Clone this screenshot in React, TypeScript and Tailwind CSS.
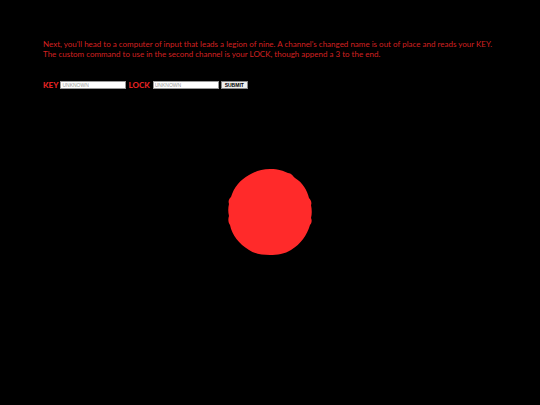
import React from 'react';

export default function App() {
  return (
    <div className="w-[540px] h-[405px] bg-black overflow-hidden" style={{ fontFamily: 'Lato, "Liberation Sans", sans-serif' }}>
      <div className="pt-[39px] pl-[43px]">
        <p className="text-[8px] leading-[10px] text-[#d42121] whitespace-nowrap">
          Next, you'll head to a computer of input that leads a legion of nine. A channel's changed name is out of place and reads your KEY.
          <br />
          The custom command to use in the second channel is your LOCK, though append a 3 to the end.
        </p>
        <div className="mt-[21px] flex items-center h-[10px]">
          <span className="text-[8px] font-black text-[#e02222] mr-[2px]">KEY</span>
          <input
            placeholder="UNKNOWN"
            className="w-[66px] h-[8px] bg-white border border-[#999] text-[5px] px-[1px] text-black placeholder:text-[#999] outline-none font-['Liberation_Sans',sans-serif]"
          />
          <span className="text-[8px] font-black text-[#e02222] ml-[2px] mr-[3px]">LOCK</span>
          <input
            placeholder="UNKNOWN"
            className="w-[66px] h-[8px] bg-white border border-[#999] text-[5px] px-[1px] text-black placeholder:text-[#999] outline-none font-['Liberation_Sans',sans-serif]"
          />
          <button className="ml-[2px] w-[27px] h-[8px] bg-[#eeeeee] border border-[#888] text-[5px] font-bold leading-none text-[#000] font-['Liberation_Sans',sans-serif]">
            SUBMIT
          </button>
        </div>
      </div>
      <div className="flex justify-center mt-[78px]">
        <svg width="86" height="88" viewBox="0 0 86 88">
          <path
            d="M43 1 C52 1 56 3 61 5 C64 5 66 8 68 10 C76 15 80 22 82 30 C84 32 85 35 84 37 C85 42 85 46 84 50 C85 52 85 55 83 57 C80 67 74 76 64 82 C58 86 50 87 43 87 C35 87 28 86 22 82 C12 76 5 67 3 57 C1 54 1 51 2 48 C1 44 1 40 2 36 C1 33 2 31 4 29 C7 19 13 12 22 7 C27 4 34 1 43 1 Z"
            fill="#ff2a2a"
          />
        </svg>
      </div>
    </div>
  );
}
